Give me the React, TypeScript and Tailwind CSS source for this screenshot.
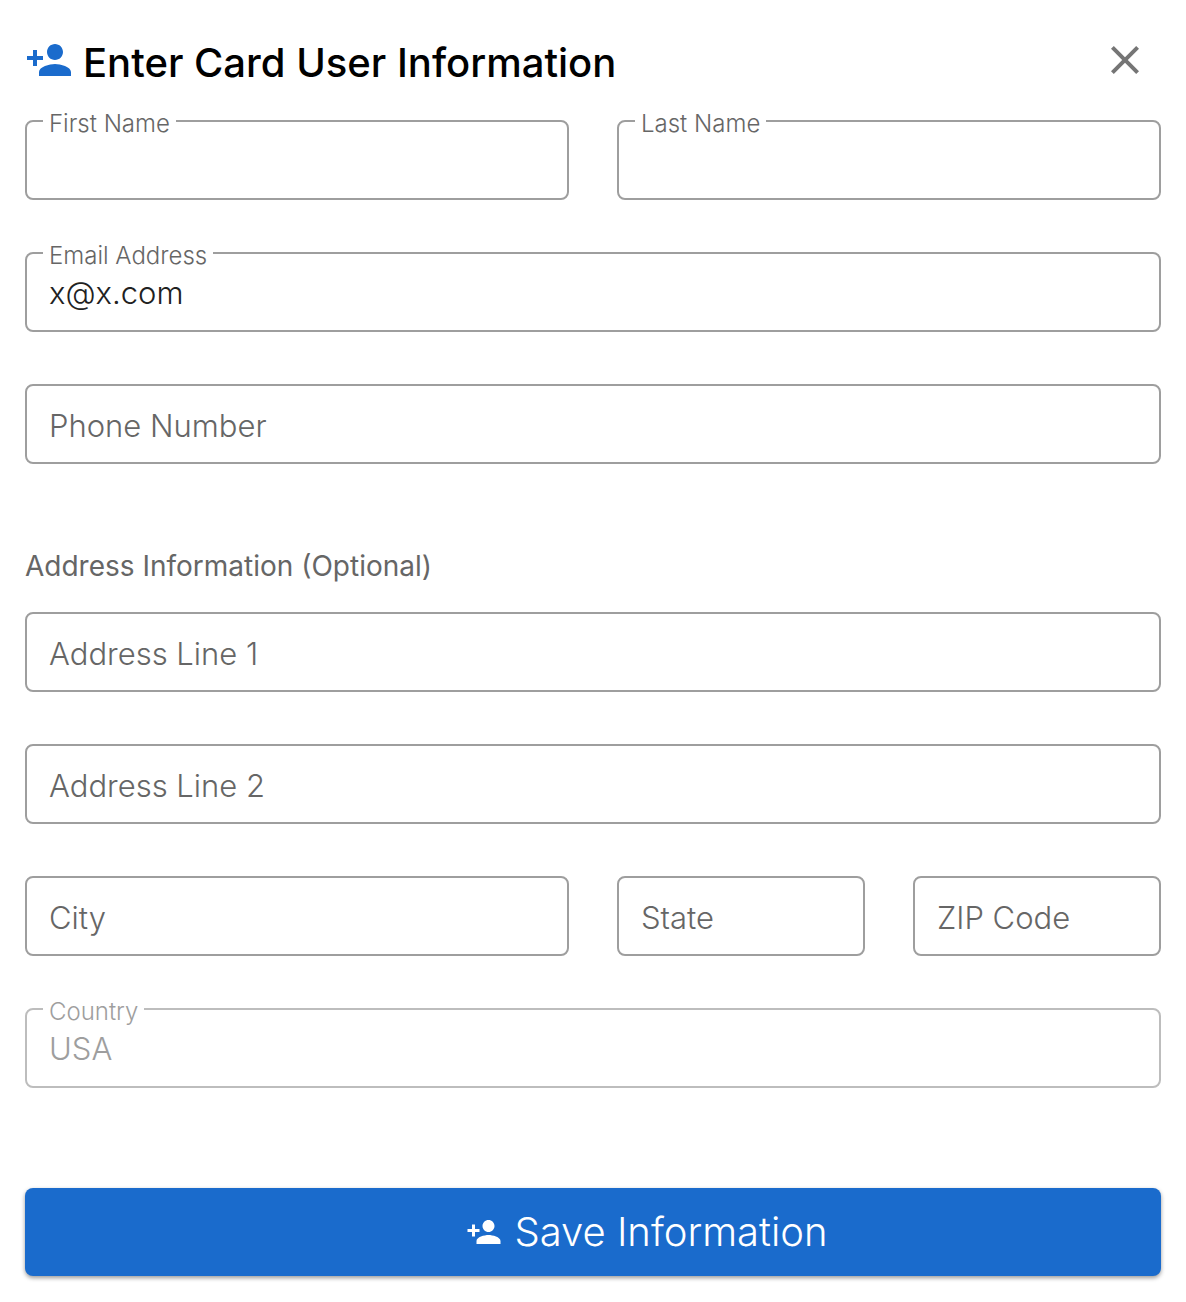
import { useState } from 'react'
import type { FormEvent } from 'react'
import { MdClose, MdPersonAdd } from 'react-icons/md'

interface TextFieldProps {
  id: string
  label: string
  type?: string
  initialValue?: string
  floating?: boolean
  disabled?: boolean
  className?: string
}

function TextField({
  id,
  label,
  type = 'text',
  initialValue = '',
  floating = false,
  disabled = false,
  className = '',
}: TextFieldProps) {
  const [value, setValue] = useState(initialValue)
  const [focused, setFocused] = useState(false)
  const raised = floating || focused || value !== ''

  return (
    <div
      className={`relative h-20 rounded-lg border-2 ${
        disabled ? 'border-[#bdbdbd]' : 'border-[#9e9e9e]'
      } ${className}`}
    >
      <label
        htmlFor={id}
        className={`absolute left-4 bg-white px-1.5 whitespace-nowrap ${
          raised ? '-top-3.5 text-2xl/8' : 'top-4 text-[31px]/12'
        } ${disabled ? 'text-[#9e9e9e]' : 'text-[#666666]'}`}
      >
        {label}
      </label>
      <input
        id={id}
        name={id}
        type={type}
        value={value}
        disabled={disabled}
        onChange={(e) => setValue(e.target.value)}
        onFocus={() => setFocused(true)}
        onBlur={() => setFocused(false)}
        className="h-full w-full rounded-lg bg-transparent px-[22px] text-[31px]/11 text-[#212121] outline-none disabled:text-[#9e9e9e]"
      />
    </div>
  )
}

export default function App() {
  const handleSubmit = (e: FormEvent) => e.preventDefault()

  return (
    <main className="bg-white px-[25px] pt-9 pb-6 font-['Inter','Liberation_Sans',sans-serif] font-light">
      <header className="flex items-start justify-between pr-3">
        <div className="flex items-start gap-2.5">
          <MdPersonAdd className="size-12 text-[#1a6bcc]" aria-hidden="true" />
          <h1 className="text-[40px]/[54px] font-medium text-black">Enter Card User Information</h1>
        </div>
        <button type="button" aria-label="Close" className="text-[#757575]">
          <MdClose className="size-12" />
        </button>
      </header>

      <form onSubmit={handleSubmit} className="mt-[30px]">
        <div className="grid grid-cols-4 gap-x-12 gap-y-13">
          <TextField id="firstName" label="First Name" floating className="col-span-2" />
          <TextField id="lastName" label="Last Name" floating className="col-span-2" />
          <TextField
            id="email"
            label="Email Address"
            type="email"
            initialValue="x@x.com"
            className="col-span-4"
          />
          <TextField id="phone" label="Phone Number" type="tel" className="col-span-4" />
        </div>

        <h2 className="mt-20 text-[28px]/11 font-normal text-[#666666]">
          Address Information (Optional)
        </h2>

        <div className="mt-6 grid grid-cols-4 gap-x-12 gap-y-13">
          <TextField id="address1" label="Address Line 1" className="col-span-4" />
          <TextField id="address2" label="Address Line 2" className="col-span-4" />
          <TextField id="city" label="City" className="col-span-2" />
          <TextField id="state" label="State" />
          <TextField id="zip" label="ZIP Code" />
          <TextField id="country" label="Country" initialValue="USA" disabled className="col-span-4" />
        </div>

        <button
          type="submit"
          className="mt-25 flex h-22 w-full items-center justify-center gap-3 rounded-lg bg-[#1a6bcc] pl-27 text-[40px]/12 text-white shadow-[0_2px_4px_rgba(0,0,0,0.4)]"
        >
          <MdPersonAdd className="size-9" aria-hidden="true" />
          Save Information
        </button>
      </form>
    </main>
  )
}
